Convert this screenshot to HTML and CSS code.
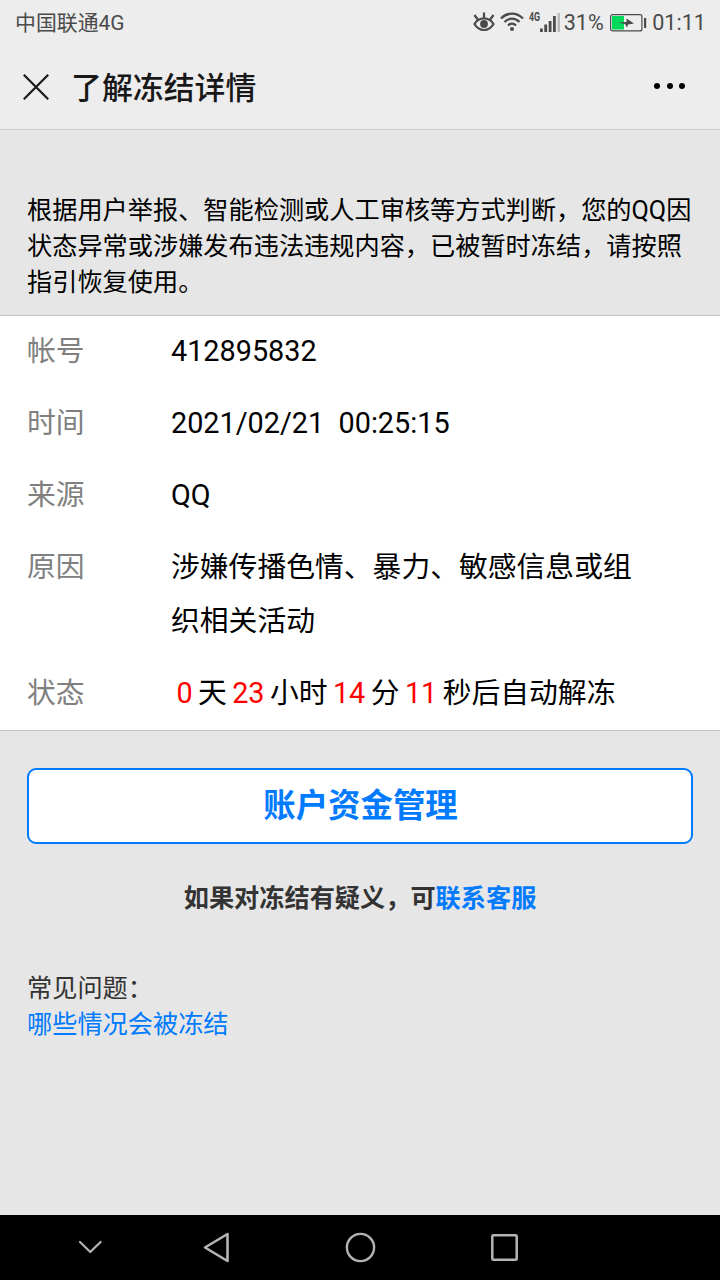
FILE: index.html
```html
<!DOCTYPE html>
<html lang="zh-Hans">

<head>
    <meta charset="UTF-8">
    <meta name="viewport" content="width=device-width, initial-scale=1.0">
    <title>了解冻结详情</title>
    <link rel="stylesheet" href="styles.css">
</head>

<body>
    <!-- 状态栏 -->
    <div class="status-bar">
        <span class="carrier">中国联通4G</span>
        <div class="status-icons">
            <svg class="icon-eye" width="22" height="20" viewBox="0 0 22 20" fill="none" stroke="#4a4a4a" stroke-width="2.200">
                <path d="M1.500 12C6 4.500 16 4.500 20.500 12C16 20 6 20 1.500 12Z" />
                <circle cx="11" cy="12" r="3.900" fill="#4a4a4a" stroke="none" />
                <path d="M11 7V0.500M4.800 7.500L1.500 3M17.200 7.500L20.500 3" />
            </svg>
            <svg class="icon-wifi" width="24" height="20" viewBox="0 0 24 20" fill="none" stroke="#4a4a4a" stroke-width="2.300">
                <path d="M1 6.500C7.500 0 16.500 0 23 6.500M4.500 10C9 5.500 15 5.500 19.500 10M8 13.500C10.500 11 13.500 11 16 13.500" />
                <circle cx="12" cy="17" r="2" fill="#4a4a4a" stroke="none" />
            </svg>
            <span class="network">4G</span>
            <svg class="icon-signal" width="20" height="20" viewBox="0 0 20 20" fill="#4a4a4a">
                <rect x="0" y="15.500" width="2.800" height="3.500" />
                <rect x="4.300" y="11.500" width="2.800" height="7.500" />
                <rect x="8.700" y="8" width="2.800" height="11" />
                <rect x="13" y="3" width="2.800" height="16" />
                <rect x="17.500" y="0" width="2.500" height="19" fill="#bcbcbc" />
            </svg>
            <span class="percent">31%</span>
            <svg class="icon-battery" width="37" height="18" viewBox="0 0 37 18">
                <rect x="0.600" y="0.600" width="31.300" height="16.300" rx="2" fill="none" stroke="#4a4a4a" stroke-width="1.200" />
                <rect x="2" y="2" width="12" height="13.500" fill="#00d95a" />
                <rect x="34" y="4" width="2.200" height="10" fill="#4a4a4a" />
                <path d="M8 8.500L16.500 8V4.500L24 9.500L18 10.500L17 13.500L15 10Z" fill="#4a4a4a" />
            </svg>
            <span class="clock">01:11</span>
        </div>
    </div>

    <header class="nav">
        <svg class="nav-close" width="26" height="26" viewBox="0 0 26 26" stroke="#181818" stroke-width="2.200">
            <path d="M0.800 0.800L25.200 25.200M25.200 0.800L0.800 25.200" />
        </svg>
        <h1>了解冻结详情</h1>
        <div class="nav-more"><i></i><i></i><i></i></div>
    </header>

    <main>
        <p class="notice">根据用户举报、智能检测或人工审核等方式判断，您的QQ因状态异常或涉嫌发布违法违规内容，已被暂时冻结，请按照指引恢复使用。</p>

        <dl class="detail">
            <div class="row">
                <dt>帐号</dt>
                <dd>412895832</dd>
            </div>
            <div class="row">
                <dt>时间</dt>
                <dd>2021/02/21&nbsp; 00:25:15</dd>
            </div>
            <div class="row">
                <dt>来源</dt>
                <dd>QQ</dd>
            </div>
            <div class="row">
                <dt>原因</dt>
                <dd>涉嫌传播色情、暴力、敏感信息或组织相关活动</dd>
            </div>
            <div class="row">
                <dt>状态</dt>
                <dd><em>0</em>天<em>23</em>小时<em>14</em>分<em>11</em>秒后自动解冻</dd>
            </div>
        </dl>

        <button class="fund-button">账户资金管理</button>
        <p class="contact">如果对冻结有疑义，可<a href="#">联系客服</a></p>

        <div class="faq">
            <p>常见问题：</p>
            <a href="#">哪些情况会被冻结</a>
        </div>
    </main>

    <!-- 系统导航键 -->
    <footer class="system-keys">
        <svg width="144" height="65" viewBox="0 0 144 65" fill="none" stroke="#b4b4b4" stroke-width="2.200" stroke-linecap="round" stroke-linejoin="round">
            <path d="M62 27L72.300 37L82.600 27" />
        </svg>
        <svg width="144" height="65" viewBox="0 0 144 65" fill="none" stroke="#b4b4b4" stroke-width="2.600" stroke-linejoin="round">
            <path d="M43 32.500L65.500 19V46Z" />
        </svg>
        <svg width="144" height="65" viewBox="0 0 144 65" fill="none" stroke="#b4b4b4" stroke-width="2.400">
            <circle cx="54.500" cy="32.500" r="13.600" />
        </svg>
        <svg width="144" height="65" viewBox="0 0 144 65" fill="none" stroke="#b4b4b4" stroke-width="2.500">
            <rect x="42.300" y="20.300" width="24.400" height="24.400" rx="1" />
        </svg>
    </footer>
</body>

</html>
```

FILE: styles.css
```css
* {
    box-sizing: border-box;
}

body {
    margin: 0;
    height: 1280px;
    display: flex;
    flex-direction: column;
    font-family: Roboto, "Noto Sans CJK SC", sans-serif;
    background: #e6e6e6;
    color: #000;
    overflow: hidden;
}

h1, p, dl, dd {
    margin: 0;
}

a {
    color: #007aff;
    text-decoration: none;
}

svg {
    display: block;
    flex: none;
}

/* 状态栏 */
.status-bar {
    height: 44px;
    padding: 1px 14px 0 15px;
    display: flex;
    justify-content: space-between;
    align-items: center;
    background: #ededed;
    color: #4a4a4a;
    font-size: 21.6px;
    line-height: 44px;
}

.carrier {
    font-size: 20.9px;
}

.status-icons {
    display: flex;
    align-items: center;
}

.icon-eye,
.icon-wifi {
    margin-bottom: 2px;
}

.icon-wifi {
    margin-left: 5px;
}

.network {
    width: 11px;
    margin: 0 0 12px 5px;
    font-size: 13px;
    font-weight: bold;
    line-height: 12px;
    transform: scaleX(0.68);
    transform-origin: left;
}

.percent {
    margin-left: 4px;
}

.icon-battery {
    margin: 0 5.5px 0 6px;
}

/* 标题栏 */
.nav {
    height: 86px;
    padding: 0 35px 0 23px;
    display: flex;
    align-items: center;
    background: #ededed;
    border-bottom: 1px solid #cacaca;
}

.nav h1 {
    flex: 1;
    margin: 4px 0 0 22px;
    font-size: 30.9px;
    font-weight: 500;
    line-height: 44px;
    color: #181818;
}

.nav-more {
    display: flex;
    gap: 6.5px;
    margin-bottom: 1px;
}

.nav-more i {
    width: 6px;
    height: 6px;
    border-radius: 50%;
    background: #000;
}

main {
    flex: 1;
}

.notice {
    height: 185px;
    padding: 63px 27px 0;
    font-size: 25.2px;
    line-height: 36px;
}

.detail {
    height: 416px;
    background: #fff;
    border-top: 1px solid #c3c3c5;
    border-bottom: 1px solid #c3c3c5;
    font-size: 28.8px;
    line-height: 54px;
}

.row {
    display: flex;
    padding: 9px 72px 9px 27px;
}

.row:first-child {
    padding-top: 8px;
}

.row dt {
    flex: none;
    width: 144px;
    color: #808080;
}

.row em {
    margin: 0 5.4px;
    font-style: normal;
    color: #f00;
}

.fund-button {
    display: block;
    width: 666px;
    height: 76px;
    margin: 37px auto 0;
    padding: 1px 0 0 1px;
    border: 2px solid #007aff;
    border-radius: 9px;
    background: #fff;
    color: #007aff;
    font-family: inherit;
    font-size: 32.4px;
    font-weight: bold;
    line-height: 71px;
}

.contact {
    margin-top: 37px;
    text-align: center;
    font-size: 25.2px;
    font-weight: bold;
    line-height: 36px;
    color: #333;
}

.faq {
    margin: 54px 27px 0;
    font-size: 25.2px;
    line-height: 36px;
    color: #333;
}

.system-keys {
    display: flex;
    padding: 0 0 0 18px;
    height: 65px;
    background: #000;
}
```
